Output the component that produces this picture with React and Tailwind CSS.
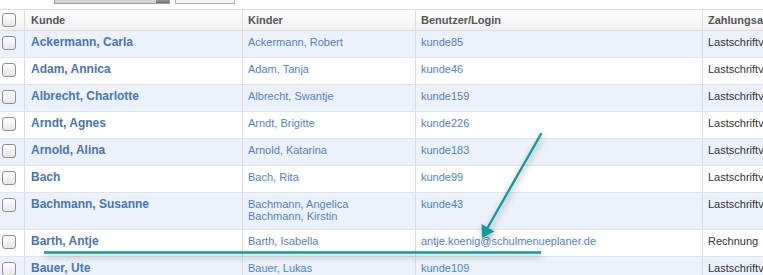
import React from "react";

const rows = [
  { k: "Ackermann, Carla", c: ["Ackermann, Robert"], u: "kunde85", z: "Lastschriftverfahren" },
  { k: "Adam, Annica", c: ["Adam, Tanja"], u: "kunde46", z: "Lastschriftverfahren" },
  { k: "Albrecht, Charlotte", c: ["Albrecht, Swantje"], u: "kunde159", z: "Lastschriftverfahren" },
  { k: "Arndt, Agnes", c: ["Arndt, Brigitte"], u: "kunde226", z: "Lastschriftverfahren" },
  { k: "Arnold, Alina", c: ["Arnold, Katarina"], u: "kunde183", z: "Lastschriftverfahren" },
  { k: "Bach", c: ["Bach, Rita"], u: "kunde99", z: "Lastschriftverfahren" },
  { k: "Bachmann, Susanne", c: ["Bachmann, Angelica", "Bachmann, Kirstin"], u: "kunde43", z: "Lastschriftverfahren", tall: true },
  { k: "Barth, Antje", c: ["Barth, Isabella"], u: "antje.koenig@schulmenueplaner.de", z: "Rechnung" },
  { k: "Bauer, Ute", c: ["Bauer, Lukas"], u: "kunde109", z: "Lastschriftverfahren" },
];

function Box() {
  return (
    <div className="w-[14px] h-[14px] rounded-[3px] border border-[#8f8f8f] bg-gradient-to-b from-white to-[#e6e6e6]" />
  );
}

export default function App() {
  return (
    <div className="relative w-[763px] h-[275px] overflow-hidden bg-white font-['Liberation_Sans',Arial,sans-serif]">
      <div className="flex items-start h-[9px]">
        <div className="ml-[54px] w-[116px] h-[4px] flex border-x border-b border-[#9a9a9a] bg-[#d5d5d5]">
          <div className="flex-1" />
          <div className="w-[13px] bg-gradient-to-b from-[#9a9a9a] to-[#707070]" />
        </div>
        <div className="ml-[5px] w-[60px] h-[4px] border-x border-b border-[#b0b0b0] bg-[#f3f3f3]" />
      </div>
      <div className="border-t border-[#dedede]">
        <div className="flex h-[21px] border-b border-[#dcdcdc] bg-gradient-to-b from-white to-[#f1f1f1] text-[11px] font-bold text-[#555] leading-[21px]">
          <div className="w-[25px] shrink-0 border-r border-[#dcdcdc] pl-[2px] pt-[3px]">
            <Box />
          </div>
          <div className="w-[218px] shrink-0 border-r border-[#dcdcdc] pl-[6px]">Kunde</div>
          <div className="w-[173px] shrink-0 border-r border-[#dcdcdc] pl-[5px]">Kinder</div>
          <div className="w-[287px] shrink-0 border-r border-[#dcdcdc] pl-[5px]">Benutzer/Login</div>
          <div className="flex-1 pl-[5px] whitespace-nowrap overflow-hidden">Zahlungsart</div>
        </div>
        {rows.map((r, i) => (
          <div
            key={i}
            className={`flex border-b border-[#e4e4e4] ${r.tall ? "h-[37px]" : "h-[27px]"} ${i % 2 === 0 ? "bg-[#ebf2fc]" : "bg-white"}`}
          >
            <div className="w-[25px] shrink-0 border-r border-[#dcdcdc] pl-[2px] pt-[5px]">
              <Box />
            </div>
            <div className="w-[218px] shrink-0 border-r border-[#dcdcdc] pl-[6px] pt-[4px] text-[12px] leading-[15px] font-bold text-[#4a74b4] whitespace-nowrap">
              {r.k}
            </div>
            <div className="w-[173px] shrink-0 border-r border-[#dcdcdc] pl-[5px] pt-[5px] text-[11px] leading-[12px] text-[#5281c3] whitespace-nowrap">
              {r.c.map((c, j) => (
                <div key={j}>{c}</div>
              ))}
            </div>
            <div className="w-[287px] shrink-0 border-r border-[#dcdcdc] pl-[5px] pt-[5px] text-[11px] leading-[12px] text-[#5281c3] whitespace-nowrap">
              {r.u}
            </div>
            <div className="flex-1 pl-[5px] pt-[5px] text-[11px] leading-[12px] text-[#333] whitespace-nowrap overflow-hidden">
              {r.z}
            </div>
          </div>
        ))}
      </div>
      <svg className="absolute inset-0 pointer-events-none" width="763" height="275" viewBox="0 0 763 275">
        <defs>
          <filter id="sh" x="-20%" y="-50%" width="140%" height="300%">
            <feDropShadow dx="1" dy="3" stdDeviation="3" floodColor="#000" floodOpacity="0.35" />
          </filter>
        </defs>
        <g filter="url(#sh)" fill="#149a9b" stroke="#149a9b">
          <line x1="44" y1="252.5" x2="541" y2="252.5" strokeWidth="2.6" />
          <line x1="541" y1="134" x2="488" y2="227" strokeWidth="2.4" strokeLinecap="round" />
          <polygon points="482,238 481.5,224 494.5,231.5" stroke="none" />
        </g>
      </svg>
    </div>
  );
}
